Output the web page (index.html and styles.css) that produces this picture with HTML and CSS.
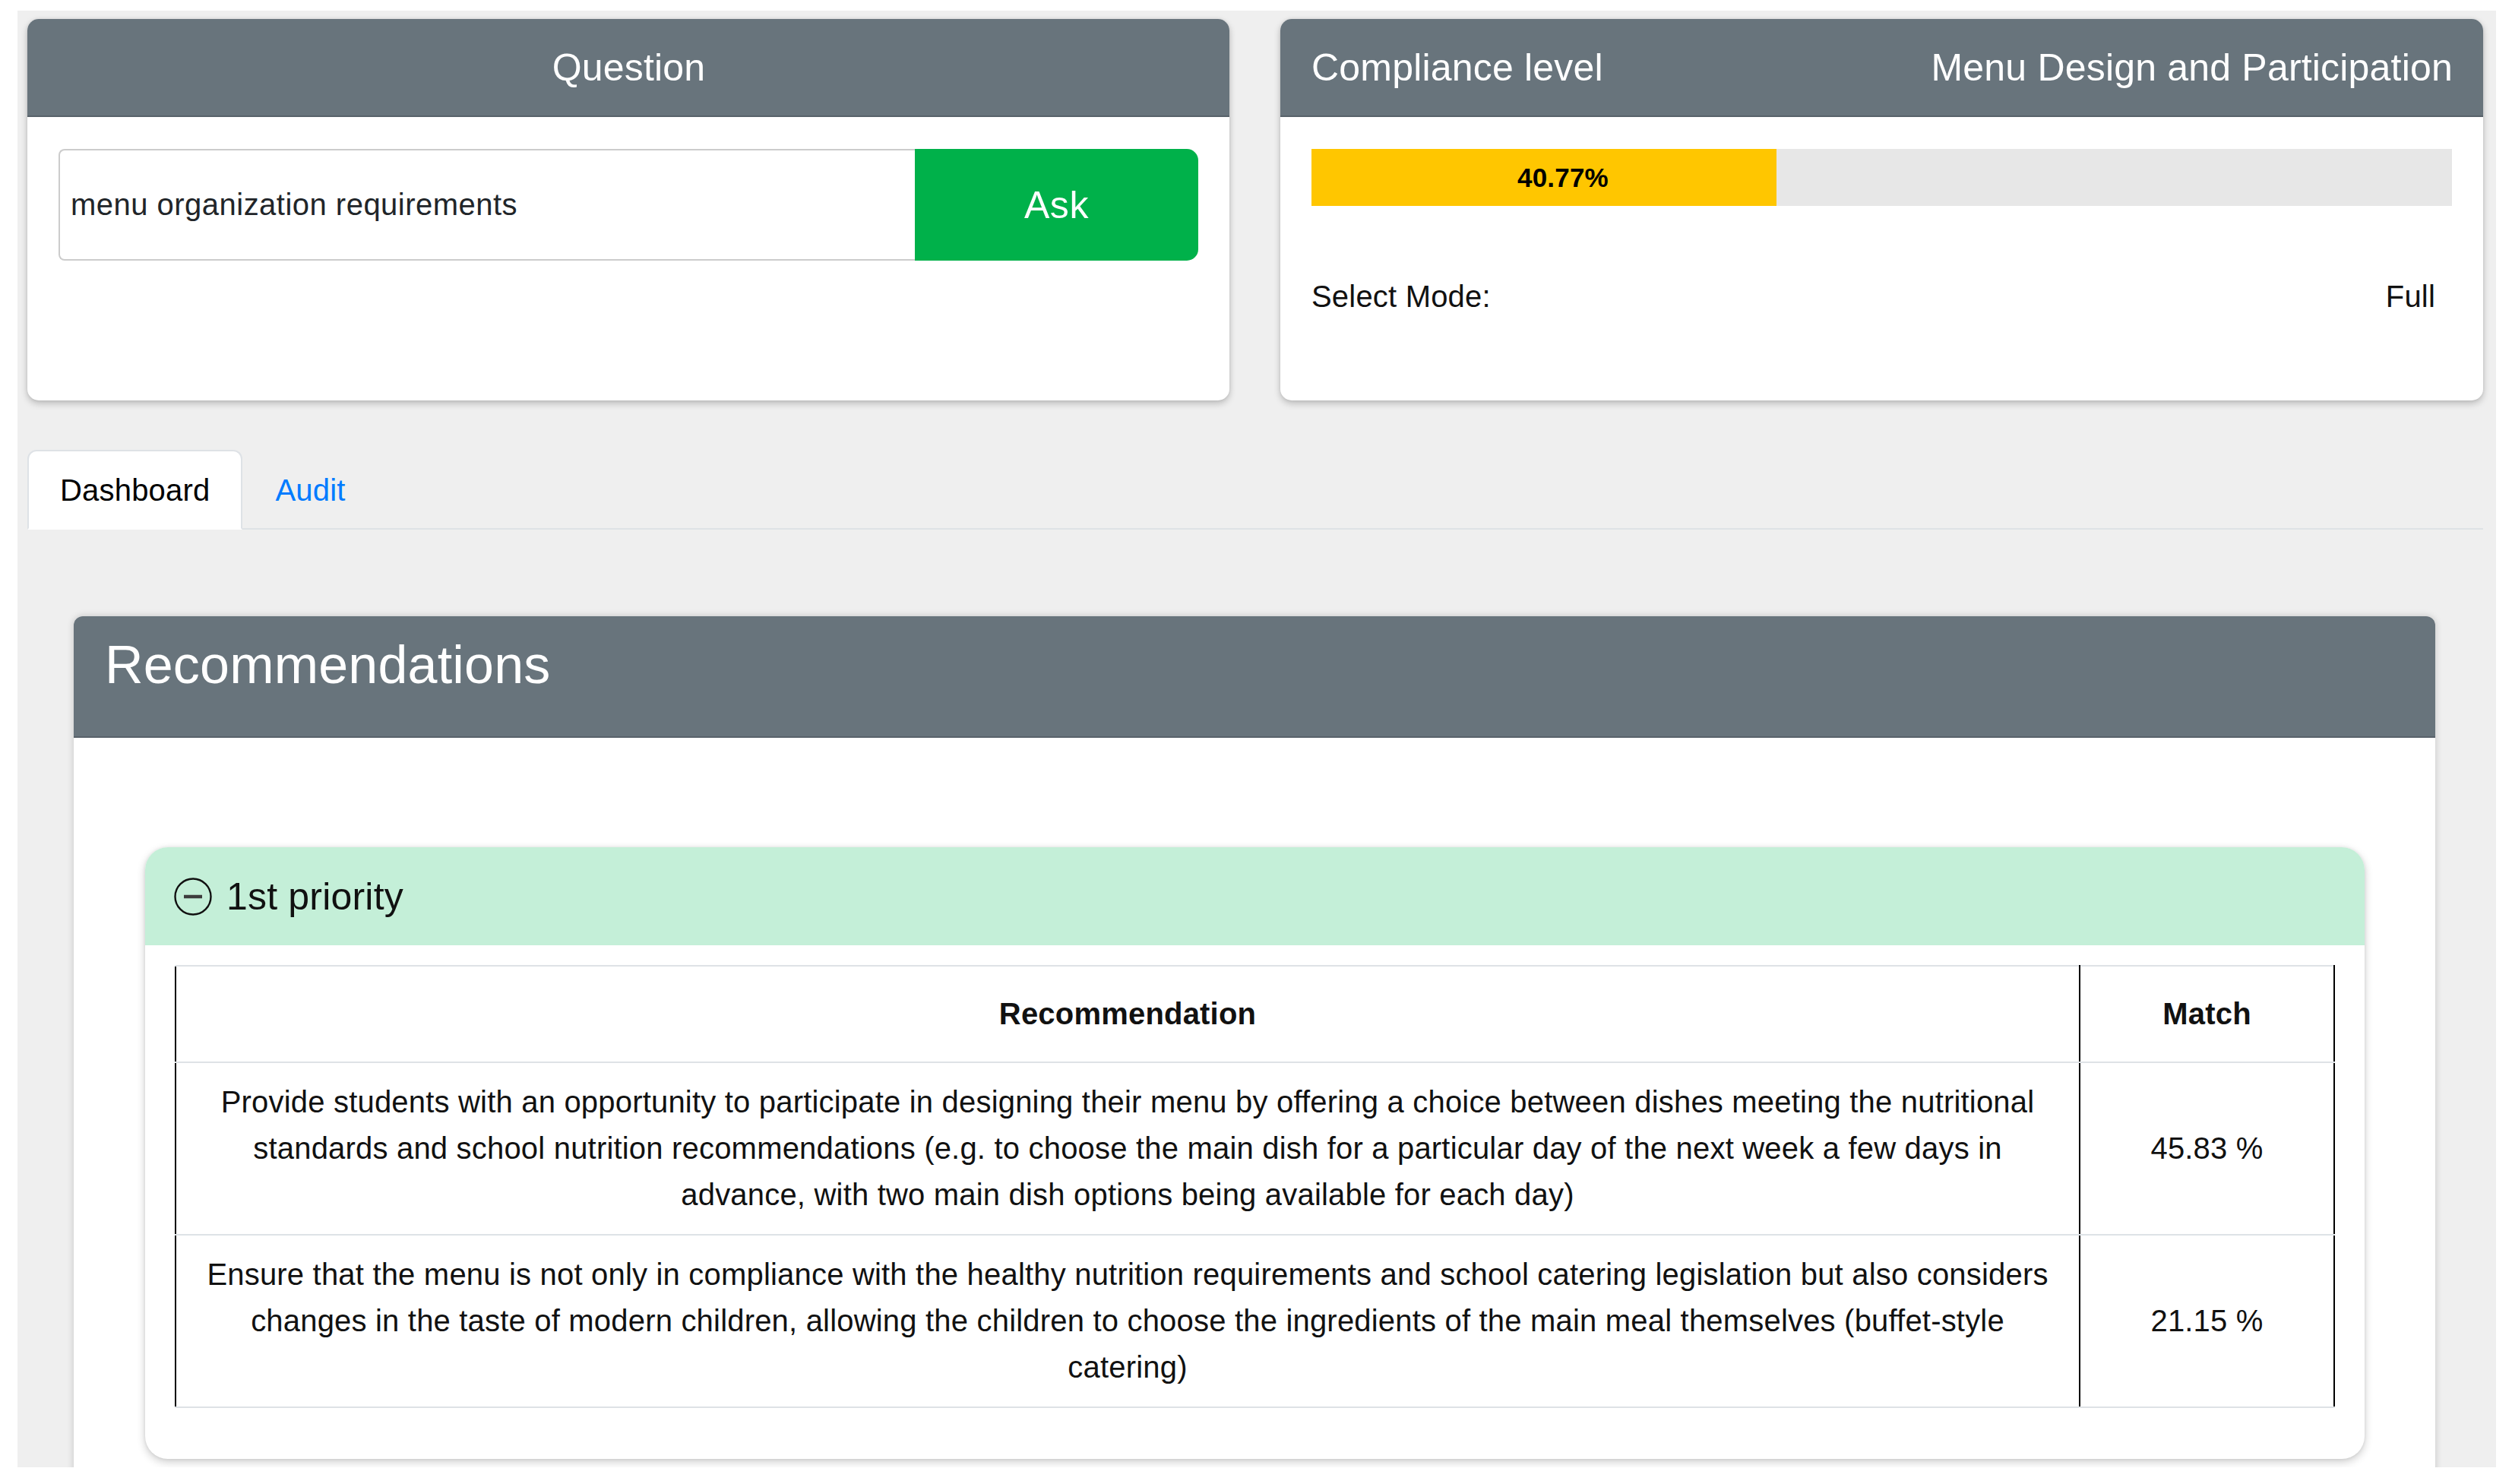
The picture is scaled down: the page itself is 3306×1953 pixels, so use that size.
FILE: index.html
```html
<!DOCTYPE html>
<html lang="en">
<head>
<meta charset="utf-8">
<title>Compliance Dashboard</title>
<link rel="stylesheet" href="styles.css">
</head>
<body>
<div class="app">
  <div class="top-row">
    <section class="card">
      <header class="card-head q-head">Question</header>
      <div class="card-body">
        <div class="ask-group">
          <input class="q-input" type="text" value="menu organization requirements">
          <button class="ask-btn" type="button">Ask</button>
        </div>
      </div>
    </section>
    <section class="card">
      <header class="card-head c-head"><span>Compliance level</span><span>Menu Design and Participation</span></header>
      <div class="card-body">
        <div class="progress"><div class="bar" style="width:40.77%">40.77%</div></div>
        <div class="mode-row"><span>Select Mode:</span><span>Full</span></div>
      </div>
    </section>
  </div>

  <nav class="tabs">
    <a class="tab active">Dashboard</a>
    <a class="tab">Audit</a>
  </nav>

  <section class="rec-card">
    <header class="rec-head">Recommendations</header>
    <div class="rec-body">
      <div class="prio-card">
        <div class="prio-head">
          <svg class="prio-icon" viewBox="0 0 50 50" width="50" height="50" aria-hidden="true">
            <circle cx="25" cy="25" r="23.5" fill="none" stroke="#111" stroke-width="2.4"/>
            <line x1="13" y1="25" x2="37" y2="25" stroke="#3d3d3d" stroke-width="4.5"/>
          </svg>
          <span>1st priority</span>
        </div>
        <div class="prio-body">
          <table class="rec-table">
            <thead>
              <tr><th>Recommendation</th><th class="match-col">Match</th></tr>
            </thead>
            <tbody>
              <tr>
                <td>Provide students with an opportunity to participate in designing their menu by offering a choice between dishes meeting the nutritional standards and school nutrition recommendations (e.g. to choose the main dish for a particular day of the next week a few days in advance, with two main dish options being available for each day)</td>
                <td>45.83 %</td>
              </tr>
              <tr>
                <td>Ensure that the menu is not only in compliance with the healthy nutrition requirements and school catering legislation but also considers changes in the taste of modern children, allowing the children to choose the ingredients of the main meal themselves (buffet-style catering)</td>
                <td>21.15 %</td>
              </tr>
            </tbody>
          </table>
        </div>
      </div>
    </div>
  </section>
</div>
</body>
</html>
```

FILE: styles.css
```css
* { box-sizing: border-box; }

html, body {
  margin: 0;
  padding: 0;
  background: #ffffff;
}

body {
  font-family: "Liberation Sans", Arial, sans-serif;
  color: #212529;
  letter-spacing: 0.012em;
}

.app {
  margin: 14px 21px 0 23px;
  height: 1917px;
  overflow: hidden;
  background: #efefef;
  padding: 11px 17px 0 13px;
}

/* ---- top cards ---- */
.top-row {
  display: grid;
  grid-template-columns: 1582px 1583px;
  column-gap: 67px;
  height: 502px;
}

.card {
  background: #ffffff;
  border-radius: 15px;
  overflow: hidden;
  box-shadow: 0 4px 10px rgba(0, 0, 0, 0.22), 0 0 4px rgba(0, 0, 0, 0.08);
}

.card-head {
  height: 129px;
  background: #68747c;
  border-bottom: 2px solid #58626a;
  color: #ffffff;
  font-size: 50px;
  display: flex;
  align-items: center;
  padding: 0 40px 0 41px;
}

.q-head { justify-content: center; }
.c-head { justify-content: space-between; }

.card-body {
  padding: 42px 41px;
}

.ask-group {
  display: flex;
  height: 147px;
}

.q-input {
  flex: 1;
  min-width: 0;
  height: 100%;
  margin: 0;
  border: 2px solid #cccccc;
  border-right: none;
  border-radius: 8px 0 0 8px;
  padding: 0 0 0 14px;
  font-family: "Liberation Sans", Arial, sans-serif;
  font-size: 40px;
  letter-spacing: 0.012em;
  color: #212529;
  background: #ffffff;
  outline: none;
}

.ask-btn {
  width: 373px;
  height: 100%;
  margin: 0;
  border: none;
  border-radius: 0 15px 15px 0;
  background: #00b14a;
  color: #ffffff;
  font-family: "Liberation Sans", Arial, sans-serif;
  font-size: 50px;
  letter-spacing: 0.012em;
}

.progress {
  height: 75px;
  background: #e7e7e7;
  display: flex;
}

.bar {
  height: 100%;
  background: #ffc600;
  display: flex;
  align-items: center;
  justify-content: center;
  padding-left: 50px;
  font-size: 35px;
  font-weight: bold;
  color: #000000;
}

.mode-row {
  margin-top: 89px;
  display: flex;
  justify-content: space-between;
  font-size: 40px;
  line-height: 60px;
  color: #111111;
  padding-right: 22px;
}

/* ---- tabs ---- */
.tabs {
  margin-top: 65px;
  display: flex;
  border-bottom: 2px solid #dee2e6;
}

.tab {
  font-size: 40px;
  line-height: 60px;
  padding: 21px 41px 20px;
  border: 2px solid transparent;
  border-radius: 12px 12px 0 0;
  margin-bottom: -2px;
  color: #007bff;
}

.tab.active {
  background: #ffffff;
  color: #000000;
  border-color: #dee2e6 #dee2e6 #ffffff;
}

/* ---- recommendations ---- */
.rec-card {
  margin: 114px 63px 0 61px;
  background: #ffffff;
  border-radius: 12px 12px 0 0;
  box-shadow: 0 0 10px rgba(0, 0, 0, 0.18);
  padding-bottom: 120px;
}

.rec-head {
  height: 160px;
  background: #68747c;
  border-bottom: 2px solid #58626a;
  border-radius: 12px 12px 0 0;
  color: #ffffff;
  font-size: 70px;
  line-height: 84px;
  padding: 22px 41px 0;
}

.rec-body {
  padding: 144px 93px 0 94px;
}

.prio-card {
  background: #ffffff;
  border-radius: 30px;
  overflow: hidden;
  box-shadow: 0 4px 12px rgba(0, 0, 0, 0.2), 0 0 4px rgba(0, 0, 0, 0.08);
}

.prio-head {
  height: 129px;
  background: #c4efd8;
  display: flex;
  align-items: center;
  gap: 19px;
  padding: 0 38px;
  font-size: 50px;
  color: #111111;
}

.prio-icon {
  flex: none;
  display: block;
}

.prio-body {
  padding: 26px 39px 67px;
}

.rec-table {
  width: 100%;
  border-collapse: collapse;
  font-size: 40px;
  line-height: 61px;
  text-align: center;
  color: #111111;
}

.rec-table th,
.rec-table td {
  border-top: 2px solid #dee2e6;
  border-bottom: 2px solid #dee2e6;
  border-left: 2px solid #000000;
  border-right: 2px solid #000000;
  vertical-align: middle;
}

.rec-table th {
  padding: 32px 24px;
  font-weight: bold;
}

.rec-table td {
  padding: 21px 24px;
}

.rec-table .match-col {
  width: 335px;
}
```
